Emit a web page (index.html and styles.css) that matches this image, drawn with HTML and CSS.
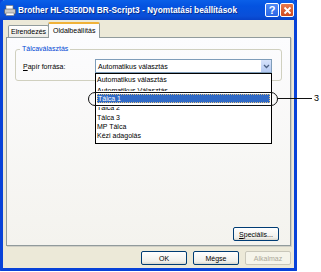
FILE: index.html
```html
<!DOCTYPE html>
<html lang="hu">
<head>
    <meta charset="UTF-8">
    <title>Nyomtatási beállítások</title>
    <link rel="stylesheet" href="styles.css">
</head>
<body>
    <div class="stage">
        <div class="window">
            <div class="titlebar">
                <svg class="app-icon" width="12" height="11" viewBox="0 0 12 11">
                    <rect x="2" y="0.5" width="7" height="4" fill="#fff" stroke="#777" stroke-width="0.6"/>
                    <rect x="0.5" y="4" width="11" height="5" rx="1" fill="#c9c9c9" stroke="#555" stroke-width="0.6"/>
                    <rect x="2" y="8" width="8" height="2.5" fill="#fff" stroke="#777" stroke-width="0.6"/>
                </svg>
                <span class="title">Brother HL-5350DN BR-Script3 - Nyomtatási beállítások</span>
                <div class="caption-btns">
                    <span class="cap-btn help">?</span>
                    <span class="cap-btn close">
                        <svg width="9" height="9" viewBox="0 0 9 9"><path d="M1.5 1.5 L7.5 7.5 M7.5 1.5 L1.5 7.5" stroke="#fff" stroke-width="1.8"/></svg>
                    </span>
                </div>
            </div>

            <div class="body">
                <div class="tabs">
                    <span class="tab">Elrendezés</span>
                    <span class="tab active">Oldalbeállítás</span>
                </div>
                <div class="page">
                    <div class="group">
                        <span class="legend">Tálcaválasztás</span>
                        <div class="field">
                            <span class="label"><u>P</u>apír forrása:</span>
                            <div class="select">
                                <span class="select-value">Automatikus választás</span>
                                <span class="select-arrow">
                                    <svg width="7" height="5" viewBox="0 0 7 5"><path d="M1 1 L3.5 3.5 L6 1" fill="none" stroke="#4d6185" stroke-width="1.3"/></svg>
                                </span>
                                <ul class="dropdown">
                                    <li>Automatikus választás</li>
                                    <li class="cut-low"><span>Automatikus Választás</span></li>
                                    <li class="selected">Tálca 1</li>
                                    <li class="cut-high"><span><i>Tálca 2</i></span></li>
                                    <li>Tálca 3</li>
                                    <li>MP Tálca</li>
                                    <li>Kézi adagolás</li>
                                </ul>
                            </div>
                        </div>
                    </div>
                    <div class="page-footer">
                        <span class="btn"><u>S</u>peciális...</span>
                    </div>
                </div>
                <div class="buttons">
                    <span class="btn">OK</span>
                    <span class="btn">Mégse</span>
                    <span class="btn disabled">Alkalmaz</span>
                </div>
            </div>
        </div>

        <div class="callout"></div>
        <div class="callout-line"></div>
        <span class="callout-num">3</span>
    </div>
</body>
</html>
```

FILE: styles.css
```css
/* page frame */
body {
    margin: 0;
    background: #fff;
    font-family: "Liberation Sans", Arial, sans-serif;
    font-size: 7px;
    color: #000;
}

.stage {
    position: relative;
    width: 321px;
    height: 272px;
}

/* XP style dialog */
.window {
    width: 297px;
    height: 271px;
    box-sizing: border-box;
    display: flex;
    flex-direction: column;
    background: #ece9d8;
    border: 3px solid #0842d8;
    border-top: 0;
    border-radius: 0 0 1px 1px;
}

.titlebar {
    height: 20px;
    margin: 0 -3px;
    display: flex;
    align-items: center;
    padding: 0 3px 0 4px;
    background: linear-gradient(#0a5fe8, #0453e0 30%, #0a4fd8 80%, #0842c8);
    color: #fff;
    border-radius: 5px 5px 0 0;
}

.app-icon {
    margin-right: 2px;
}

.title {
    flex: 1;
    font-weight: bold;
    font-size: 8.3px;
    white-space: nowrap;
    text-shadow: 1px 1px 0 #0a2f8c;
}

.caption-btns {
    display: flex;
    gap: 1px;
}

.cap-btn {
    width: 14px;
    height: 14px;
    box-sizing: border-box;
    border: 1px solid #fff;
    border-radius: 2px;
    display: flex;
    align-items: center;
    justify-content: center;
    font-weight: bold;
    font-size: 11px;
}

.help {
    background: linear-gradient(#4f8af5, #2a66e6);
}

.close {
    background: linear-gradient(#e6794e, #cf4a1e);
}

.body {
    flex: 1;
    display: flex;
    flex-direction: column;
    padding: 3px 3px 0 3px;
}

/* tabs */
.tabs {
    display: flex;
    align-items: flex-end;
    height: 14px;
    padding-left: 2px;
}

.tab {
    height: 11px;
    padding: 0 2px;
    line-height: 11px;
    border: 1px solid #919b9c;
    border-bottom: 0;
    border-radius: 2px 2px 0 0;
    background: linear-gradient(#fff, #ecebe6);
}

.tab.active {
    height: 14px;
    line-height: 14px;
    padding: 0 4px;
    margin-left: -1px;
    border-top: 2px solid #f0b23a;
    background: #fcfcfe;
    position: relative;
    top: 1px;
}

.page {
    flex: 1;
    display: flex;
    flex-direction: column;
    border: 1px solid #919b9c;
    box-shadow: 1px 1px 0 #d0cfc6;
    background: linear-gradient(#fcfcfe, #f4f3ee);
    padding: 11px 8px 4px 8px;
}

/* group box */
.group {
    position: relative;
    height: 21px;
    border: 1px solid #d0d0bf;
    border-radius: 3px;
    padding: 9px 0 0 7px;
}

.legend {
    position: absolute;
    top: -5px;
    left: 4px;
    padding: 0 2px;
    background: #fbfbfc;
    color: #0046d5;
}

.field {
    display: flex;
    align-items: center;
}

.label {
    width: 72px;
}

/* combo box */
.select {
    position: relative;
    width: 177px;
    height: 14px;
    box-sizing: border-box;
    border: 1px solid #7f9db9;
    background: #fff;
    display: flex;
    align-items: center;
}

.select-value {
    flex: 1;
    padding-left: 2px;
}

.select-arrow {
    width: 10px;
    height: 12px;
    display: flex;
    align-items: center;
    justify-content: center;
    background: linear-gradient(#d6e2fb, #b5caf3);
    border-left: 1px solid #fff;
}

.dropdown {
    position: absolute;
    top: 13px;
    left: -1px;
    width: 177px;
    box-sizing: border-box;
    margin: 0;
    padding: 1px 0 2px;
    list-style: none;
    background: #fff;
    border: 1px solid #000;
    z-index: 2;
}

.dropdown li {
    height: 9.4px;
    line-height: 9.4px;
    padding-left: 1px;
    overflow: hidden;
}

/* rows squeezed by the scaled screenshot */
.dropdown li.cut-low span,
.dropdown li.cut-high span {
    display: block;
    height: 5px;
    overflow: hidden;
    line-height: 9.4px;
}

.dropdown li.cut-low span {
    margin-top: 2px;
}

.dropdown li.cut-high span {
    margin-top: 4px;
}

.dropdown li.cut-high i {
    display: block;
    font-style: normal;
    margin-top: -4.5px;
}

.dropdown li.selected {
    margin: 0 1px;
    background: #316ac5;
    color: #fff;
    outline: 1px dotted #e0c080;
    outline-offset: -1px;
}

.page-footer {
    margin-top: auto;
    display: flex;
    justify-content: flex-end;
    padding-right: 3px;
}

/* buttons */
.btn {
    width: 46px;
    height: 14px;
    box-sizing: border-box;
    display: flex;
    align-items: center;
    justify-content: center;
    border: 1px solid #003c74;
    border-radius: 2px;
    background: linear-gradient(#fff, #f0efea 80%, #d8d6cc);
}

.buttons {
    display: flex;
    justify-content: flex-end;
    gap: 6px;
    padding: 5px 0 0;
    height: 22px;
    box-sizing: border-box;
}

.btn.disabled {
    border-color: #c9c7ba;
    color: #aca899;
    background: #f5f4ea;
}

/* callout over the screenshot */
.callout {
    position: absolute;
    left: 88px;
    top: 92px;
    width: 190px;
    height: 14px;
    box-sizing: border-box;
    border: 1.5px solid #111;
    border-radius: 7px;
    z-index: 3;
}

.callout-line {
    position: absolute;
    left: 278px;
    top: 98px;
    width: 34px;
    height: 1px;
    background: #111;
}

.callout-num {
    position: absolute;
    left: 314px;
    top: 93px;
    font-size: 9px;
}
```
